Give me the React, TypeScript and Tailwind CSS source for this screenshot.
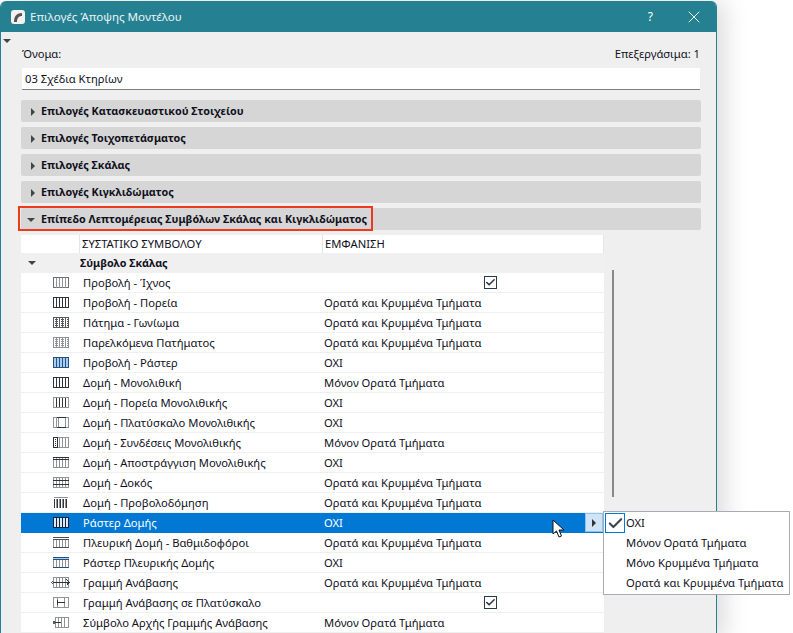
import { Check, X } from "lucide-react";

const sections = [
  "Επιλογές Κατασκευαστικού Στοιχείου",
  "Επιλογές Τοιχοπετάσματος",
  "Επιλογές Σκάλας",
  "Επιλογές Κιγκλιδώματος",
];

const VIS = "Ορατά και Κρυμμένα Τμήματα";
const ONLY = "Μόνον Ορατά Τμήματα";

type Row = { name: string; value?: string; checked?: boolean; icon: string };

const rows: Row[] = [
  { name: "Προβολή - Ίχνος", checked: true, icon: "trace" },
  { name: "Προβολή - Πορεία", value: VIS, icon: "walk" },
  { name: "Πάτημα - Γωνίωμα", value: VIS, icon: "tread" },
  { name: "Παρελκόμενα Πατήματος", value: VIS, icon: "acc" },
  { name: "Προβολή - Ράστερ", value: "ΟΧΙ", icon: "raster" },
  { name: "Δομή - Μονολιθική", value: ONLY, icon: "walk" },
  { name: "Δομή - Πορεία Μονολιθικής", value: "ΟΧΙ", icon: "walkGrey" },
  { name: "Δομή - Πλατύσκαλο Μονολιθικής", value: "ΟΧΙ", icon: "landing" },
  { name: "Δομή - Συνδέσεις Μονολιθικής", value: ONLY, icon: "joints" },
  { name: "Δομή - Αποστράγγιση Μονολιθικής", value: "ΟΧΙ", icon: "drain" },
  { name: "Δομή - Δοκός", value: VIS, icon: "beam" },
  { name: "Δομή - Προβολοδόμηση", value: VIS, icon: "cant" },
  { name: "Ράστερ Δομής", value: "ΟΧΙ", icon: "selected" },
  { name: "Πλευρική Δομή - Βαθμιδοφόροι", value: VIS, icon: "side" },
  { name: "Ράστερ Πλευρικής Δομής", value: "ΟΧΙ", icon: "sideRaster" },
  { name: "Γραμμή Ανάβασης", value: VIS, icon: "line" },
  { name: "Γραμμή Ανάβασης σε Πλατύσκαλο", checked: true, icon: "lineLanding" },
  { name: "Σύμβολο Αρχής Γραμμής Ανάβασης", value: ONLY, icon: "lineStart" },
];

const bars = (xs: number[], stroke: string, y1 = 0.5, y2 = 10.5) =>
  xs.map((x) => <line key={x} x1={x} x2={x} y1={y1} y2={y2} stroke={stroke} />);

function StairIcon({ kind }: { kind: string }) {
  const dark = "#2f3438";
  const grey = "#8f9396";
  const all = [3.5, 6.5, 9.5, 12.5];
  let body = null;
  if (kind === "trace") {
    body = (
      <>
        <rect x="0.5" y="0.5" width="15" height="10" fill="none" stroke="#6d7174" />
        {bars(all, grey)}
      </>
    );
  } else if (kind === "walk") {
    body = (
      <>
        <rect x="0.5" y="0.5" width="15" height="10" fill="none" stroke={dark} />
        {bars(all, dark)}
      </>
    );
  } else if (kind === "walkGrey") {
    body = (
      <>
        {bars(all, dark)}
        <rect x="0.5" y="0.5" width="15" height="10" fill="none" stroke={grey} />
      </>
    );
  } else if (kind === "tread" || kind === "acc") {
    const c = kind === "tread" ? "#555a5e" : grey;
    body = (
      <>
        <rect x="0.5" y="0.5" width="15" height="10" fill="#fff" stroke={c} />
        {bars(all, c)}
        {[2.5, 4.5, 6.5, 8.5].map((y) => (
          <line key={y} x1="0" x2="16" y1={y} y2={y} stroke={c} strokeDasharray="1 1" />
        ))}
      </>
    );
  } else if (kind === "raster") {
    body = (
      <>
        <rect x="0.5" y="0.5" width="15" height="10" fill="#a9cdf2" stroke="#23527f" />
        {bars(all, "#23527f")}
      </>
    );
  } else if (kind === "landing") {
    body = (
      <>
        {bars([0.5, 15.5], grey)}
        {bars([3.5, 5.5, 12.5], grey)}
        <line x1="0" x2="16" y1="0.5" y2="0.5" stroke={grey} />
        <line x1="0" x2="16" y1="10.5" y2="10.5" stroke={grey} />
        <line x1="4" x2="13" y1="0.5" y2="0.5" stroke={dark} />
        <line x1="4" x2="13" y1="10.5" y2="10.5" stroke={dark} />
      </>
    );
  } else if (kind === "joints") {
    body = (
      <>
        <rect x="0.5" y="0.5" width="15" height="10" fill="none" stroke={grey} />
        {bars([6.5, 9.5, 12.5], grey)}
        <rect x="0.5" y="0.5" width="4" height="10" fill="none" stroke={dark} />
        <line x1="2.5" x2="2.5" y1="2" y2="9" stroke={dark} strokeDasharray="1 1" />
      </>
    );
  } else if (kind === "drain") {
    body = (
      <>
        <rect x="0.5" y="0.5" width="15" height="10" fill="none" stroke={grey} />
        {bars(all, grey)}
        <line x1="0" x2="16" y1="0.5" y2="0.5" stroke={dark} />
        <line x1="0" x2="16" y1="2.5" y2="2.5" stroke={dark} />
      </>
    );
  } else if (kind === "beam") {
    body = (
      <>
        <rect x="0.5" y="0.5" width="15" height="10" fill="none" stroke={grey} />
        {bars(all, grey)}
        <line x1="0" x2="16" y1="3.5" y2="3.5" stroke={dark} />
        <line x1="0" x2="16" y1="7.5" y2="7.5" stroke={dark} />
      </>
    );
  } else if (kind === "cant") {
    body = (
      <>
        {bars([1.5, 4.5, 7.5, 10.5, 13.5], dark, 1.5, 10.5)}
        {bars([3, 6, 9, 12], grey, 1.5, 10.5)}
        <line x1="1" x2="15" y1="0.5" y2="0.5" stroke={grey} />
      </>
    );
  } else if (kind === "selected") {
    body = (
      <>
        <rect x="0.5" y="0.5" width="15" height="10" fill="#dbe9f7" stroke="#10243a" />
        {bars(all, "#10243a")}
      </>
    );
  } else if (kind === "side" || kind === "sideRaster") {
    const c = kind === "side" ? "#4a4f53" : "#23527f";
    body = (
      <>
        <rect x="0.5" y="0.5" width="15" height="10" fill="none" stroke={grey} />
        {bars(all, grey, 3, 10.5)}
        <line x1="0" x2="16" y1="0.5" y2="0.5" stroke={c} />
        <line x1="0" x2="16" y1="2.5" y2="2.5" stroke={c} />
        <line x1="0" x2="16" y1="1.5" y2="1.5" stroke={kind === "side" ? "#fff" : "#a9cdf2"} />
        <line x1="0" x2="16" y1="10.5" y2="10.5" stroke={c} />
      </>
    );
  } else if (kind === "line") {
    body = (
      <>
        <rect x="0.5" y="0.5" width="15" height="10" fill="none" stroke={grey} />
        {bars(all, grey)}
        <line x1="0" x2="15" y1="5.5" y2="5.5" stroke={dark} />
        <circle cx="-0.5" cy="5.5" r="1" fill="#fff" stroke={dark} strokeWidth="0.8" />
        <path d="M13.5 2.5 L16 5.5 L13.5 8.5" fill="none" stroke={dark} />
      </>
    );
  } else if (kind === "lineLanding") {
    body = (
      <>
        {bars([0.5, 4.5, 11.5, 15.5], grey)}
        <line x1="0" x2="16" y1="0.5" y2="0.5" stroke={grey} />
        <line x1="0" x2="16" y1="10.5" y2="10.5" stroke={grey} />
        <line x1="4" x2="12" y1="5.5" y2="5.5" stroke={dark} />
        <line x1="4.5" x2="4.5" y1="3" y2="8" stroke={dark} />
      </>
    );
  } else {
    body = (
      <>
        <rect x="2.5" y="0.5" width="13" height="10" fill="none" stroke={grey} />
        {bars([5.5, 8.5, 11.5], grey)}
        <line x1="2" x2="8" y1="5.5" y2="5.5" stroke={dark} />
        <circle cx="1" cy="5.5" r="1" fill="#fff" stroke={dark} strokeWidth="0.8" />
      </>
    );
  }
  return (
    <svg width="18" height="11" viewBox="-2 0 18 11" shapeRendering="crispEdges" className="overflow-visible">
      {body}
    </svg>
  );
}

const Tri = ({ open = false, color = "#444" }: { open?: boolean; color?: string }) => (
  <svg width="8" height="8" viewBox="0 0 8 8">
    <path d={open ? "M0 2 H8 L4 6 Z" : "M2 0 V8 L6 4 Z"} fill={color} />
  </svg>
);

export default function App() {
  return (
    <div className="relative h-[633px] w-[793px] overflow-hidden bg-white font-['Noto_Sans',sans-serif] text-[11.2px] text-[#10101c]">
      {/* dialog */}
      <div className="relative ml-0 mt-px h-[640px] w-[717px] overflow-hidden rounded-t-[6px] border-x border-[#25818f] bg-[#efefef] shadow-[8px_0_24px_rgba(0,0,0,0.14)]">
        <div className="flex h-[31px] items-center bg-[#258192] pl-[10px] pr-[12px] text-white">
          <svg width="14" height="14" viewBox="0 0 14 14" className="mr-[5px]">
            <rect width="14" height="14" rx="3" fill="#f1f1f1" />
            <path d="M3 12 C3 6 6 3 11 3 V6 C8 6 6 8 6 12 Z" fill="#555" />
          </svg>
          <span className="text-[11.6px] text-[#eaf4f5]">Επιλογές Άποψης Μοντέλου</span>
          <span className="ml-auto mr-[31px] text-[12px]">?</span>
          <X size={20} strokeWidth={1.1} />
        </div>

        <div className="absolute left-[2px] top-[36px]">
          <Tri open />
        </div>

        <div className="pl-[20px] pr-[15px]">
          <div className="flex h-[36px] items-end justify-between pb-[5px] pl-px pr-px">
            <span>Όνομα:</span>
            <span>Επεξεργάσιμα: 1</span>
          </div>
          <div className="mx-px flex h-[22px] items-center border-b border-[#808080] bg-white pl-[3px] pt-[2px]">
            03 Σχέδια Κτηρίων
          </div>

          <div className="mt-[10px] flex flex-col gap-[5px] text-[10.75px] font-bold">
            {sections.map((s) => (
              <div key={s} className="flex h-[22px] items-center rounded-[2px] bg-[#d6d6d6] pt-px">
                <span className="ml-[8px] w-[12px]">
                  <Tri />
                </span>
                {s}
              </div>
            ))}
            <div className="relative flex h-[22px] items-center rounded-[2px] bg-[#d6d6d6] pt-px">
              <span className="ml-[6px] w-[14px]">
                <Tri open />
              </span>
              Επίπεδο Λεπτομέρειας Συμβόλων Σκάλας και Κιγκλιδώματος
              <div className="absolute left-[-3px] top-[-2px] h-[25px] w-[355px] border-2 border-[#f0391c]" />
            </div>
          </div>

          {/* table */}
          <div className="mt-[5px] flex">
            <div className="w-[583px] bg-white">
              <div className="flex h-[18px] items-center border-r border-[#e6e6e6]">
                <div className="h-full w-[59px] border-r border-[#e6e6e6]" />
                <div className="h-full w-[243px] border-r border-[#e6e6e6] pl-[2px] leading-[18px]">ΣΥΣΤΑΤΙΚΟ ΣΥΜΒΟΛΟΥ</div>
                <div className="pl-[2px]">ΕΜΦΑΝΙΣΗ</div>
              </div>
              <div className="flex h-[20px] items-center bg-[#f0f0f0] text-[10.75px] font-bold">
                <span className="ml-[7px] w-[52px]">
                  <Tri open />
                </span>
                Σύμβολο Σκάλας
              </div>
              {rows.map((r) => {
                const sel = r.icon === "selected";
                return (
                  <div
                    key={r.name}
                    className={`flex h-[20px] items-center border-b ${sel ? "border-[#0078d4] bg-[#0078d4] text-white" : "border-[#efefef]"}`}
                  >
                    <div className="flex w-[62px] pl-[30px]">
                      <StairIcon kind={r.icon} />
                    </div>
                    <div className="w-[241px] whitespace-nowrap pt-[2px]">{r.name}</div>
                    {r.value ? (
                      <div className="whitespace-nowrap pt-[2px]">{r.value}</div>
                    ) : (
                      <div className="flex w-[280px] justify-center pl-[53px]">
                        <span className="flex h-[13px] w-[13px] items-center justify-center border-[1.5px] border-[#2c3a44]">
                          <Check size={11} strokeWidth={3.5} className="text-[#2c3a44]" />
                        </span>
                      </div>
                    )}
                    {sel && (
                      <div className="ml-auto mr-px flex h-[19px] w-[18px] items-center justify-center border border-[#8cc4ee] bg-[#cfe4f7]">
                        <Tri color="#333" />
                      </div>
                    )}
                  </div>
                );
              })}
            </div>
            <div className="ml-[8px] mt-[35px] h-[227px] w-[2px] bg-[#8a8a8a]" />
          </div>
        </div>
      </div>

      {/* dropdown menu */}
      <div className="absolute left-[603px] top-[511px] flex h-[84px] w-[187px] flex-col justify-center border border-[#a8abb0] bg-white pl-[22px]">
        {["ΟΧΙ", ONLY, "Μόνο Κρυμμένα Τμήματα", VIS].map((o) => (
          <div key={o} className="flex h-[20px] items-center whitespace-nowrap">
            {o}
          </div>
        ))}
        <div className="absolute left-[1px] top-[1px] flex h-[20px] w-[20px] items-center justify-center border border-[#0078d4]">
          <Check size={17} strokeWidth={3} className="text-[#3a4650]" />
        </div>
      </div>

      {/* cursor */}
      <svg width="16" height="20" viewBox="0 0 16 20" className="absolute left-[552px] top-[519px]">
        <path d="M1 1 V15 L4.5 12 L7 18 L9.5 17 L7 11 H12 Z" fill="#fff" stroke="#111" strokeWidth="1" />
      </svg>
    </div>
  );
}
